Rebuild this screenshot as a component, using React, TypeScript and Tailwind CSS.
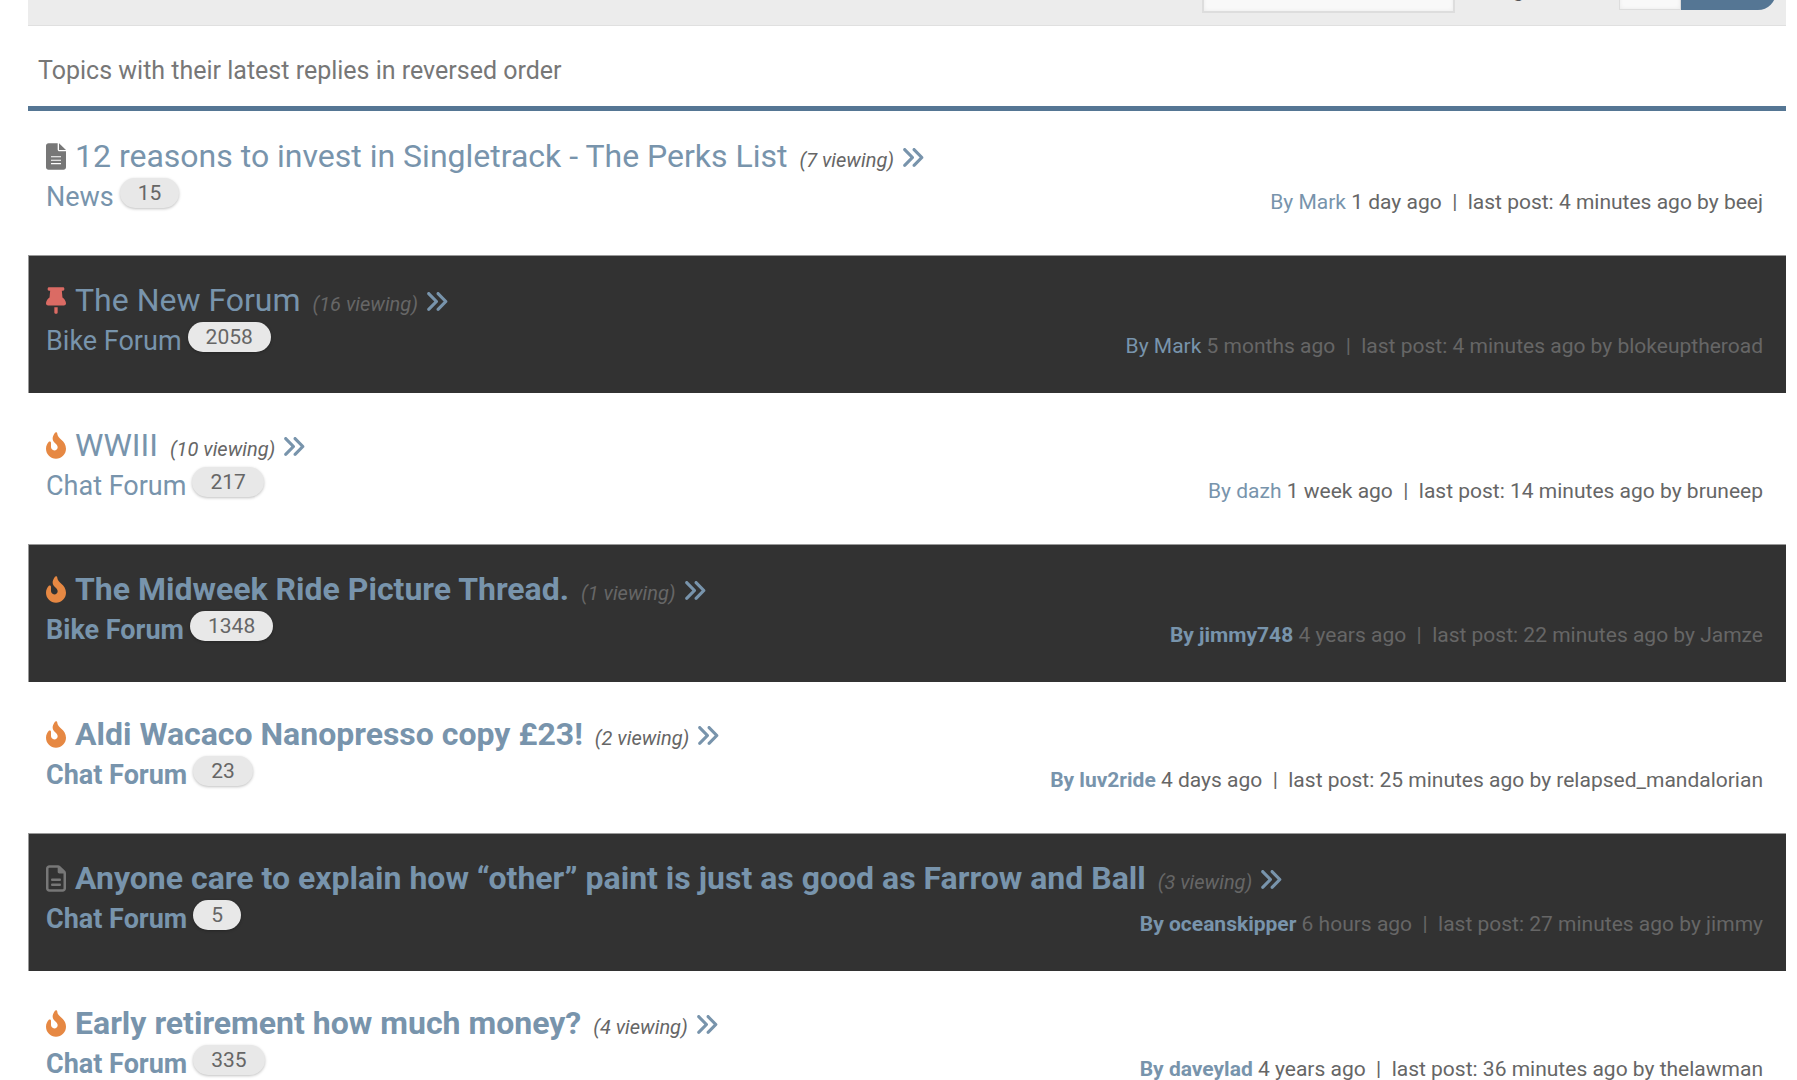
import type { ComponentType } from "react";
import { FaFire } from "react-icons/fa";
import { FaAnglesRight, FaRegFileLines } from "react-icons/fa6";

type Topic = {
  icon: "news" | "sticky" | "hot" | "normal";
  title: string;
  forum: string;
  replies: number;
  viewing: number;
  author: string;
  created: string;
  lastPost: string;
  lastPoster: string;
  unread?: boolean;
};

const topics: Topic[] = [
  { icon: "news", title: "12 reasons to invest in Singletrack - The Perks List", forum: "News", replies: 15, viewing: 7, author: "Mark", created: "1 day ago", lastPost: "4 minutes ago", lastPoster: "beej" },
  { icon: "sticky", title: "The New Forum", forum: "Bike Forum", replies: 2058, viewing: 16, author: "Mark", created: "5 months ago", lastPost: "4 minutes ago", lastPoster: "blokeuptheroad" },
  { icon: "hot", title: "WWIII", forum: "Chat Forum", replies: 217, viewing: 10, author: "dazh", created: "1 week ago", lastPost: "14 minutes ago", lastPoster: "bruneep" },
  { icon: "hot", title: "The Midweek Ride Picture Thread.", forum: "Bike Forum", replies: 1348, viewing: 1, author: "jimmy748", created: "4 years ago", lastPost: "22 minutes ago", lastPoster: "Jamze", unread: true },
  { icon: "hot", title: "Aldi Wacaco Nanopresso copy £23!", forum: "Chat Forum", replies: 23, viewing: 2, author: "luv2ride", created: "4 days ago", lastPost: "25 minutes ago", lastPoster: "relapsed_mandalorian", unread: true },
  { icon: "normal", title: "Anyone care to explain how “other” paint is just as good as Farrow and Ball", forum: "Chat Forum", replies: 5, viewing: 3, author: "oceanskipper", created: "6 hours ago", lastPost: "27 minutes ago", lastPoster: "jimmy", unread: true },
  { icon: "hot", title: "Early retirement how much money?", forum: "Chat Forum", replies: 335, viewing: 4, author: "daveylad", created: "4 years ago", lastPost: "36 minutes ago", lastPoster: "thelawman", unread: true },
];

const NewsIcon = ({ className }: { className?: string }) => (
  <svg viewBox="0 0 384 512" fill="currentColor" className={className}>
    <path
      fillRule="evenodd"
      d="M48 0H224V120c0 22 14 36 34 36H384V464c0 27-21 48-48 48H48c-27 0-48-21-48-48V48C0 21 21 0 48 0zM96 250v22H288v-22zM96 316v22H288v-22zM96 382v22H288v-22z"
    />
    <path d="M250 0L384 132H250z" />
  </svg>
);

const PinIcon = ({ className }: { className?: string }) => (
  <svg viewBox="0 0 384 512" fill="currentColor" className={className}>
    <path d="M56 0H328c14 0 24 12 24 28v12c0 16-10 28-24 28H304l12 130c34 22 60 56 68 104 3 26-14 50-40 50H40c-26 0-43-24-40-50 8-48 34-82 68-104L80 68H56C42 68 32 56 32 40V28C32 12 42 0 56 0z" />
    <path d="M160 384h64v96c0 18-14 32-32 32s-32-14-32-32z" />
  </svg>
);

const icons: Record<Topic["icon"], { Icon: ComponentType<{ className?: string }>; color: string }> = {
  news: { Icon: NewsIcon, color: "text-[#777777]" },
  sticky: { Icon: PinIcon, color: "text-[#db6b64]" },
  hot: { Icon: FaFire, color: "text-[#e68843]" },
  normal: { Icon: FaRegFileLines, color: "text-[#777777]" },
};

const TopicRow = ({ topic, dark }: { topic: Topic; dark: boolean }) => {
  const { Icon, color } = icons[topic.icon];
  const weight = topic.unread ? "font-bold" : "font-normal";

  return (
    <li
      className={`pr-[18px] ${
        dark
          ? "border-t border-l border-[#999999] bg-[#323232] pt-[24px] pb-[33px] pl-[17px]"
          : "bg-white pt-[25px] pb-[32px] pl-[18px]"
      }`}
    >
      <div className="flex h-[40px] items-center whitespace-nowrap">
        <Icon className={`h-[27px] w-[20px] shrink-0 ${color}`} />
        <a href="#" className={`ml-[9px] text-[32px] leading-[40px] text-[#7894ac] ${weight}`}>
          {topic.title}
        </a>
        <span className="ml-3 pt-[7px] text-[20px] leading-[28px] text-[#666666] italic">
          ({topic.viewing} viewing)
        </span>
        <a href="#" aria-label="Go to last post" className="ml-1.5 pt-0.5 text-[#7894ac]">
          <FaAnglesRight className="size-[25px]" />
        </a>
      </div>
      <div className="flex h-[40px] items-start justify-between whitespace-nowrap">
        <div className="flex items-start">
          <a href="#" className={`text-[27px] leading-[42px] text-[#7894ac] ${weight}`}>
            {topic.forum}
          </a>
          <span className="mt-0.5 ml-[6px] rounded-full bg-[#e8e8e8] px-[18px] text-[21px] leading-[30px] text-[#666666] shadow-[0_1px_3px_rgba(0,0,0,0.25)]">
            {topic.replies}
          </span>
        </div>
        <p className="mr-[5px] pt-[10px] text-[21px] leading-[32px] text-[#666666]">
          <a href="#" className={`text-[#7894ac] ${weight}`}>
            By {topic.author}
          </a>{" "}
          {topic.created} &nbsp;|&nbsp; last post: {topic.lastPost} by {topic.lastPoster}
        </p>
      </div>
    </li>
  );
};

export default function App() {
  return (
    <div className="h-screen overflow-hidden bg-white pr-[11px] pl-[28px] font-[Roboto,sans-serif]">
      {/* toolbar, scrolled mostly out of view */}
      <form className="flex h-[26px] items-start justify-end overflow-hidden border-b border-[#e0e0e0] bg-[#ececec] pr-[10px]">
        <input
          type="text"
          aria-label="Search topics"
          className="-mt-[27px] h-[40px] w-[253px] border-2 border-[#dddddd] bg-[#f9f9f9] shadow-[inset_0_0_4px_rgba(0,0,0,0.06)]"
        />
        <label htmlFor="page" className="-mt-[22px] w-[164px] pl-[33px] text-[21px] leading-[24px] text-[#555555]">
          Page
        </label>
        <input
          id="page"
          type="text"
          className="-mt-[30px] h-[40px] w-[62px] border border-[#dddddd] bg-[#f9f9f9] shadow-[inset_0_0_4px_rgba(0,0,0,0.06)]"
        />
        <button type="submit" aria-label="Go" className="-mt-[30px] h-[40px] w-[95px] rounded-r-[18px] bg-[#557694]" />
      </form>
      <h1 className="border-b-[5px] border-[#557694] pt-[27px] pb-[17px] pl-[10px] text-[25px] leading-[36px] text-[#777777]">
        Topics with their latest replies in reversed order
      </h1>
      <ul className="flex flex-col gap-[7px]">
        {topics.map((topic, i) => (
          <TopicRow key={topic.title} topic={topic} dark={i % 2 === 1} />
        ))}
      </ul>
    </div>
  );
}
